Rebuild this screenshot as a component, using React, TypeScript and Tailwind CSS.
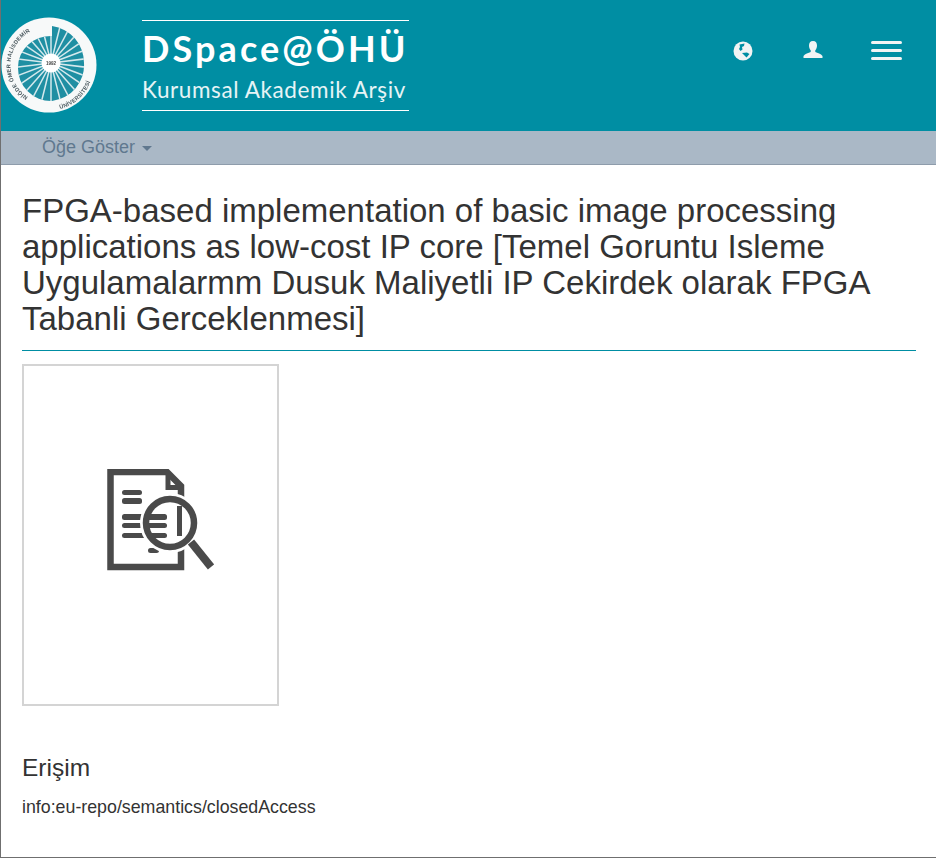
const docLines = [
  { x: 15, w: 20, y: 21, h: 5 },
  { x: 15, w: 20, y: 29, h: 6 },
  { x: 15, w: 45, y: 45, h: 6 },
  { x: 15, w: 45, y: 54, h: 5 },
  { x: 15, w: 45, y: 64, h: 5 },
  { x: 41, w: 11, y: 79, h: 5 },
];

function UniversityLogo() {
  const rays = Array.from({ length: 26 }, (_, i) => (i * 360) / 26);
  return (
    <svg width="98" height="98" viewBox="0 0 98 98" className="block blur-[0.4px]">
      <defs>
        <path id="ring-left" d="M 28 80 A 38 38 0 0 1 47 10" />
        <path id="ring-right" d="M 60 92 A 44 44 0 0 0 93 46" />
        <clipPath id="disc-cut">
          <path d="M52 9 A37 37 0 0 1 84 46 A37 36 0 0 1 52 84 A33 33 0 0 1 18 50 A33 31 0 0 1 52 19 Z" />
        </clipPath>
      </defs>
      <circle cx="49" cy="48" r="47.5" fill="#f7f9f9" />
      <g clipPath="url(#disc-cut)">
        <rect width="98" height="98" fill="#1f8fa3" />
        {rays.map((deg) => (
          <line
            key={deg}
            x1="51"
            y1="46"
            x2="51"
            y2="2"
            stroke="#d5e9ed"
            strokeWidth="1.5"
            transform={`rotate(${deg} 51 46)`}
          />
        ))}
      </g>
      <circle cx="51" cy="46" r="9.5" fill="#ffffff" />
      <text x="51" y="48" textAnchor="middle" fontSize="4.5" fontWeight="700" fill="#444" fontFamily="Liberation Sans, sans-serif">
        1992
      </text>
      <text fontSize="5.6" fontWeight="700" letterSpacing="0.3" fill="#4b5a60" fontFamily="Liberation Sans, sans-serif">
        <textPath href="#ring-left">NİĞDE ÖMER HALİSDEMİR</textPath>
      </text>
      <text fontSize="5.6" fontWeight="700" letterSpacing="0.3" fill="#4b5a60" fontFamily="Liberation Sans, sans-serif">
        <textPath href="#ring-right">ÜNİVERSİTESİ</textPath>
      </text>
    </svg>
  );
}

function GlobeIcon() {
  return (
    <svg width="20" height="20" viewBox="0 0 20 20">
      <circle cx="10" cy="10" r="9.5" fill="#f2f4f4" />
      <path d="M6.5 3.5 L11.5 2.5 L11 5 L9 6 L9.5 8.5 L7.5 10 L6 8 L7 6 Z" fill="#008ea3" />
      <path d="M9 12 L14 11.5 L16.5 13 L13.5 16.5 L11.5 14.5 Z" fill="#008ea3" />
    </svg>
  );
}

function UserIcon() {
  return (
    <svg width="20" height="20" viewBox="0 0 20 20">
      <path
        d="M10 1 C12.8 1 14 3 14 5.5 C14 7.6 13.2 9.3 12.3 10.3 L12.3 12 C14.5 13 18 13.6 19.5 16 L19.5 18 L0.5 18 L0.5 16 C2 13.6 5.5 13 7.7 12 L7.7 10.3 C6.8 9.3 6 7.6 6 5.5 C6 3 7.2 1 10 1 Z"
        fill="#f2f4f4"
      />
    </svg>
  );
}

function ReportIcon() {
  return (
    <svg width="107" height="102" viewBox="0 0 107 102" fill="none">
      <path d="M74 30 V17 L60 3 H3.5 V98 H74 V74" stroke="#4a4a4a" strokeWidth="6.5" />
      <path d="M61 3 V18.5 H74" stroke="#4a4a4a" strokeWidth="5" />
      {docLines.map((l) => (
        <rect key={l.y} x={l.x} y={l.y} width={l.w} height={l.h} rx="2.5" fill="#4a4a4a" />
      ))}
      <rect x="70" y="37" width="5" height="30" fill="#4a4a4a" />
      <circle cx="63" cy="54" r="27.5" stroke="#ffffff" strokeWidth="5" />
      <circle cx="63" cy="54" r="24" stroke="#4a4a4a" strokeWidth="6.5" />
      <path d="M84 73 L104 98" stroke="#4a4a4a" strokeWidth="8" />
    </svg>
  );
}

export default function App() {
  return (
    <div className="min-h-[858px] border-l border-b border-[#6f6f6f] bg-white font-['Liberation_Sans',Arial,sans-serif] text-[#333]">
      <header className="flex h-[131px] items-start bg-[#008ea3] pr-[34px] text-white">
        <div className="ml-[-1px] mt-[17px]">
          <UniversityLogo />
        </div>
        <div className="ml-[44px] mt-[20px] w-[267px] font-['Lato',sans-serif]">
          <div className="border-t border-white pt-[5px] text-[36px] leading-[44px] font-bold tracking-[3.1px]">DSpace@ÖHÜ</div>
          <div className="mt-[6px] border-b border-white pb-[6px] text-[22.5px] leading-[28px] tracking-[0.6px] text-[#e6f4f6]">
            Kurumsal Akademik Arşiv
          </div>
        </div>
        <div className="ml-auto mt-[41px] flex items-start">
          <GlobeIcon />
          <div className="ml-[50px] mt-[-1px]">
            <UserIcon />
          </div>
          <div className="ml-[48px] flex w-[31px] flex-col gap-[5px]">
            <span className="h-[3px] rounded-sm bg-[#f2f4f4]" />
            <span className="h-[3px] rounded-sm bg-[#f2f4f4]" />
            <span className="h-[3px] rounded-sm bg-[#f2f4f4]" />
          </div>
        </div>
      </header>

      <nav className="flex h-[34px] items-center border-b border-[#8e9cab] bg-[#aab8c6] pl-[41px] text-[18px] text-[#60788f]">
        Öğe Göster
        <span className="ml-[7px] mt-[2px] h-0 w-0 border-x-[5px] border-t-[5px] border-x-transparent border-t-[#60788f]" />
      </nav>

      <main className="pl-[21px] pr-[20px] pt-[28px]">
        <h2 className="border-b border-b-[#008ea3] pb-[13px] text-[33px] leading-[36px] font-normal text-[#333]">
          FPGA-based implementation of basic image processing applications as low-cost IP core [Temel Goruntu Isleme
          Uygulamalarmm Dusuk Maliyetli IP Cekirdek olarak FPGA Tabanli Gerceklenmesi]
        </h2>

        <div className="mt-[13px] flex h-[342px] w-[257px] items-center justify-center border-2 border-[#d4d4d4] pb-[31px] pl-[20px]">
          <ReportIcon />
        </div>

        <h5 className="mt-[47px] text-[24.5px] leading-[30px] font-normal">Erişim</h5>
        <p className="mt-[13px] text-[17.8px] leading-[22px]">info:eu-repo/semantics/closedAccess</p>
      </main>
    </div>
  );
}
